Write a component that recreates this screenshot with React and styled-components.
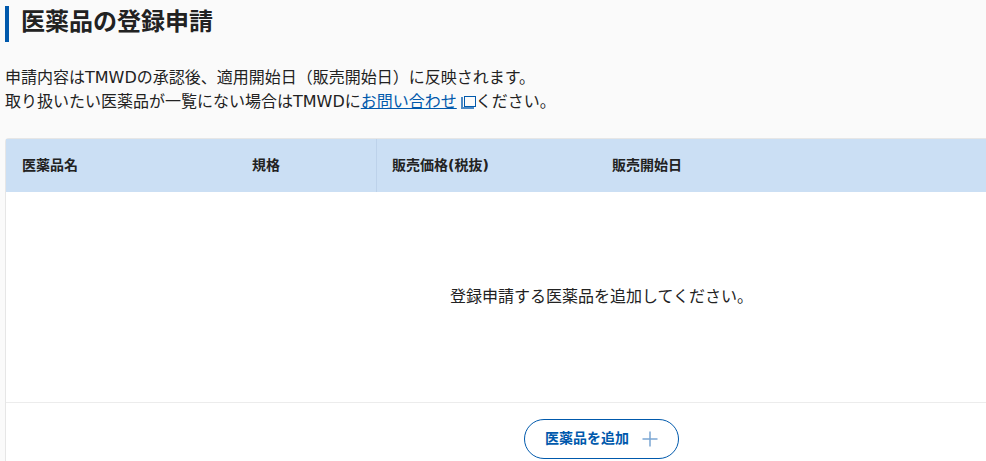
import React from 'react';
import styled, { createGlobalStyle } from 'styled-components';

const GlobalStyle = createGlobalStyle`
  html, body {
    margin: 0;
    padding: 0;
    height: 100%;
    overflow: hidden;
    background: #fafafa;
  }
  body {
    font-family: "DejaVu Sans", "Noto Sans CJK JP", sans-serif;
    color: #222;
  }
`;

const Page = styled.main`
  width: 1188px;
  padding: 6px 0 0 5px;
`;

const Title = styled.h1`
  margin: 0;
  height: 36px;
  border-left: 4px solid #0059ac;
  padding-left: 12px;
  font-size: 24px;
  line-height: 33px;
  font-weight: 700;
`;

const Lead = styled.p`
  margin: 24px 0 0;
  font-size: 16px;
  line-height: 24px;
`;

const Inquiry = styled.a`
  color: #0059ac;
  text-decoration: underline;
`;

const ExternalIcon = styled.svg`
  width: 15px;
  height: 13px;
  margin: 0 0 0 4px;
  vertical-align: -2px;
  color: #0059ac;
`;

const Card = styled.section`
  margin-top: 24px;
  height: 330px;
  background: #fff;
  border: 1px solid #e6e6e6;
  border-radius: 4px 0 0 0;
  border-right: 0;
  display: flex;
  flex-direction: column;
`;

const HeaderRow = styled.div`
  display: grid;
  grid-template-columns: 371px 235px 1fr;
  height: 53px;
  background: #cbdff4;
  font-size: 14px;
  font-weight: 700;
`;

const HeaderGroup = styled.div`
  display: flex;
  align-items: center;
  padding-left: ${({ $inset }) => $inset}px;
  padding-bottom: 4px;
  border-right: ${({ $divided }) => ($divided ? '1px solid #bdd2ea' : '0')};
`;

const NameHead = styled.span`
  width: 230px;
`;

const EmptyMessage = styled.div`
  height: 211px;
  display: flex;
  align-items: center;
  justify-content: center;
  padding: 0 0 4px 4px;
  box-sizing: border-box;
  font-size: 16px;
  border-bottom: 1px solid #ececec;
`;

const Footer = styled.div`
  display: flex;
  justify-content: center;
  padding-top: 16px;
  padding-left: 4px;
`;

const AddButton = styled.button`
  width: 155px;
  height: 40px;
  display: flex;
  align-items: center;
  justify-content: center;
  gap: 13px;
  background: #fff;
  border: 1px solid #0059ac;
  border-radius: 20px;
  color: #0059ac;
  font-family: inherit;
  font-size: 14px;
  font-weight: 700;
`;

const AddLabel = styled.span`
  padding-bottom: 4px;
`;

const PlusIcon = styled.svg`
  width: 16px;
  height: 16px;
  color: #7ba6d4;
`;

export default function App() {
  return (
    <Page>
      <GlobalStyle />
      <Title>医薬品の登録申請</Title>
      <Lead>
        申請内容はTMWDの承認後、適用開始日（販売開始日）に反映されます。
        <br />
        取り扱いたい医薬品が一覧にない場合はTMWDに
        <Inquiry href="#">お問い合わせ</Inquiry>
        <ExternalIcon viewBox="0 0 15 13" fill="none" stroke="currentColor" strokeWidth="1">
          <rect x="3.5" y="0.5" width="11" height="10" />
          <path d="M1 1v11h12" opacity="0.7" strokeWidth="2" />
        </ExternalIcon>
        ください。
      </Lead>
      <Card>
        <HeaderRow>
          <HeaderGroup $inset={16} $divided>
            <NameHead>医薬品名</NameHead>
            <span>規格</span>
          </HeaderGroup>
          <HeaderGroup $inset={15}>販売価格(税抜)</HeaderGroup>
          <HeaderGroup $inset={0}>販売開始日</HeaderGroup>
        </HeaderRow>
        <EmptyMessage>登録申請する医薬品を追加してください。</EmptyMessage>
        <Footer>
          <AddButton>
            <AddLabel>医薬品を追加</AddLabel>
            <PlusIcon viewBox="0 0 16 16" fill="none" stroke="currentColor" strokeWidth="1.5">
              <path d="M8 0.5v15M0.5 8h15" />
            </PlusIcon>
          </AddButton>
        </Footer>
      </Card>
    </Page>
  );
}
